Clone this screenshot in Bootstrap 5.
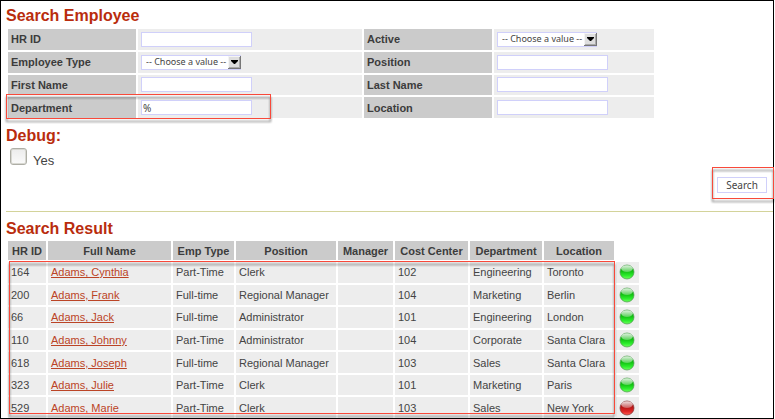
<!DOCTYPE html>
<html lang="en">
<head>
<meta charset="utf-8">
<meta name="viewport" content="width=device-width, initial-scale=1">
<title>Search Employee</title>
<link href="https://cdn.jsdelivr.net/npm/bootstrap@5.3.0/dist/css/bootstrap.min.css" rel="stylesheet">
<style>
body { font-family: "Liberation Sans", Arial, sans-serif; font-size: 11px; line-height: 18px; color: #444; background: #fff; }
.frame { min-height: 100vh; margin-right: 1px; padding: 5px 0 0 5px; border: 1px solid #000; }
.title { font-size: 16px; line-height: 20px; font-weight: 700; color: #b92c0d; margin: 0; }
.grid { border-collapse: separate; border-spacing: 2px; table-layout: fixed; line-height: 16px; }
.grid th { background: #cbcbcb; color: #3c3c3c; }
.grid td { background: #ededed; }
.grid th, .grid td { padding: 0 3px; vertical-align: middle; white-space: nowrap; }
.criteria { width: 650px; height: 93px; margin-top: 1px; }
.criteria label { display: block; }
.results { width: 635px; height: 181px; margin-bottom: -2px; }
.results thead tr { height: 19px; }
.results thead th { padding: 0; text-align: center; }
.results thead th.blank { background: none; }
.results a { color: #bb4426; }
.field, .pick select, .go { font-family: "Noto Sans", "Open Sans", sans-serif; color: #444; background: #fff; border: 1px solid #d0d0fa; border-radius: 0; }
.field { display: block; width: 111px; height: 15px; padding: 0 1px; font-size: 10px; line-height: 13px; }
.pick { display: block; width: 100px; height: 15px; }
.pick select { display: block; width: 100%; height: 100%; padding: 0 0 0 4px; appearance: none; font-size: 9px; line-height: 12px; }
.pick svg { position: absolute; right: 0; top: 1px; pointer-events: none; }
.outline { position: absolute; border: 1px solid #f8493a; filter: drop-shadow(0 3px 1px rgba(0,0,0,.55)); pointer-events: none; z-index: 2; }
.outline-row { left: -2px; top: -3px; width: 265px; height: 25px; }
.outline-go { inset: -10px -7px -6px -5px; }
.outline-list { left: 3px; top: 22px; width: 606px; height: 153px; }
.tick { appearance: none; width: 17px; height: 17px; border: 1px solid #aeaea6; border-radius: 3px; background: linear-gradient(#ececec, #fafafa); box-shadow: inset 0 0 0 1px #d8d8d2; margin: 0; }
.tick:checked { background: #666; }
.yes { font-size: 13px; padding-top: 4px; }
.criteria + .title { margin-top: 6px; }
.debug { padding-left: 4px; gap: 6px; margin-top: 2px; }
.actions { padding: 7px 6px 0 0; }
.go { width: 50px; height: 16px; padding: 0; font-size: 10px; line-height: 13px; display: block; }
.rule { border: 0; border-top: 1px solid #d3d39a; opacity: 1; margin: 18px 0 7px; }
.orb { display: block; }
</style>
</head>
<body>
<svg width="0" height="0" class="position-absolute" aria-hidden="true">
  <defs>
    <linearGradient id="gBody" x1="0" y1="0" x2="0" y2="1"><stop offset="0" stop-color="#1ca81c"/><stop offset=".45" stop-color="#12c012"/><stop offset=".75" stop-color="#2cec2c"/><stop offset="1" stop-color="#6cff5c"/></linearGradient>
    <linearGradient id="rBody" x1="0" y1="0" x2="0" y2="1"><stop offset="0" stop-color="#981818"/><stop offset=".45" stop-color="#b81616"/><stop offset=".75" stop-color="#e02828"/><stop offset="1" stop-color="#ff5a50"/></linearGradient>
    <linearGradient id="shine" x1="0" y1="0" x2="0" y2="1"><stop offset="0" stop-color="#fff" stop-opacity=".85"/><stop offset="1" stop-color="#fff" stop-opacity=".3"/></linearGradient>
    <symbol id="green" viewBox="0 0 16 16"><circle cx="8" cy="8" r="7" fill="url(#gBody)" stroke="#4c984c" stroke-width=".7"/><ellipse cx="8" cy="4.6" rx="5.8" ry="3.3" fill="url(#shine)"/></symbol>
    <symbol id="red" viewBox="0 0 16 16"><circle cx="8" cy="8" r="7" fill="url(#rBody)" stroke="#7c3434" stroke-width=".7"/><ellipse cx="8" cy="4.6" rx="5.8" ry="3.3" fill="url(#shine)"/></symbol>
    <symbol id="drop" viewBox="0 0 13 13"><path d="M0 0H13V13H0Z" fill="#777"/><path d="M0 0H12V12H0Z" fill="#f4f4f4"/><path d="M1 12H12V1H11V11H1Z" fill="#aaa"/><path d="M1 1H11V11H1Z" fill="#dedede"/><path d="M3 4H10V5L7 8H6L3 5Z" fill="#000"/></symbol>
  </defs>
</svg>
<main class="frame">
  <form>
    <h1 class="title">Search Employee</h1>
    <table class="grid criteria">
      <colgroup><col style="width:128px"><col style="width:224px"><col style="width:128px"><col style="width:160px"></colgroup>
      <tbody>
        <tr><th><label for="hrid">HR ID</label></th><td><input class="field" id="hrid" type="text"></td><th><label for="active">Active</label></th><td><span class="pick position-relative"><select id="active"><option>-- Choose a value --</option></select><svg width="13" height="13" aria-hidden="true"><use href="#drop"/></svg></span></td></tr>
        <tr><th><label for="etype">Employee Type</label></th><td><span class="pick position-relative"><select id="etype"><option>-- Choose a value --</option></select><svg width="13" height="13" aria-hidden="true"><use href="#drop"/></svg></span></td><th><label for="position">Position</label></th><td><input class="field" id="position" type="text"></td></tr>
        <tr><th><label for="first">First Name</label></th><td><input class="field" id="first" type="text"></td><th><label for="last">Last Name</label></th><td><input class="field" id="last" type="text"></td></tr>
        <tr><th class="position-relative"><label for="dept">Department</label><span class="outline outline-row"></span></th><td><input class="field" id="dept" type="text" value="%"></td><th><label for="location">Location</label></th><td><input class="field" id="location" type="text"></td></tr>
      </tbody>
    </table>
    <h2 class="title">Debug:</h2>
    <div class="debug d-flex"><input class="tick" type="checkbox" id="debug"><label class="yes" for="debug">Yes</label></div>
    <div class="actions d-flex justify-content-end"><div class="position-relative"><button class="go" type="submit">Search</button><span class="outline outline-go"></span></div></div>
  </form>
  <hr class="rule">
  <section>
    <h2 class="title">Search Result</h2>
    <div class="position-relative">
    <table class="grid results">
      <colgroup><col style="width:38px"><col style="width:123px"><col style="width:61px"><col style="width:100px"><col style="width:55px"><col style="width:73px"><col style="width:72px"><col style="width:70px"><col style="width:23px"></colgroup>
      <thead><tr><th>HR ID</th><th>Full Name</th><th>Emp Type</th><th>Position</th><th>Manager</th><th>Cost Center</th><th>Department</th><th>Location</th><th class="blank"></th></tr></thead>
      <tbody>
        <tr><td>164</td><td><a href="#">Adams, Cynthia</a></td><td>Part-Time</td><td>Clerk</td><td></td><td>102</td><td>Engineering</td><td>Toronto</td><td><svg class="orb" width="16" height="16"><use href="#green"/></svg></td></tr>
        <tr><td>200</td><td><a href="#">Adams, Frank</a></td><td>Full-time</td><td>Regional Manager</td><td></td><td>104</td><td>Marketing</td><td>Berlin</td><td><svg class="orb" width="16" height="16"><use href="#green"/></svg></td></tr>
        <tr><td>66</td><td><a href="#">Adams, Jack</a></td><td>Full-time</td><td>Administrator</td><td></td><td>101</td><td>Engineering</td><td>London</td><td><svg class="orb" width="16" height="16"><use href="#green"/></svg></td></tr>
        <tr><td>110</td><td><a href="#">Adams, Johnny</a></td><td>Part-Time</td><td>Administrator</td><td></td><td>104</td><td>Corporate</td><td>Santa Clara</td><td><svg class="orb" width="16" height="16"><use href="#green"/></svg></td></tr>
        <tr><td>618</td><td><a href="#">Adams, Joseph</a></td><td>Full-time</td><td>Regional Manager</td><td></td><td>103</td><td>Sales</td><td>Santa Clara</td><td><svg class="orb" width="16" height="16"><use href="#green"/></svg></td></tr>
        <tr><td>323</td><td><a href="#">Adams, Julie</a></td><td>Part-Time</td><td>Clerk</td><td></td><td>101</td><td>Marketing</td><td>Paris</td><td><svg class="orb" width="16" height="16"><use href="#green"/></svg></td></tr>
        <tr><td>529</td><td><a href="#">Adams, Marie</a></td><td>Part-Time</td><td>Clerk</td><td></td><td>103</td><td>Sales</td><td>New York</td><td><svg class="orb" width="16" height="16"><use href="#red"/></svg></td></tr>
      </tbody>
    </table>
    <span class="outline outline-list"></span>
    </div>
  </section>
</main>
<script src="https://cdn.jsdelivr.net/npm/bootstrap@5.3.0/dist/js/bootstrap.bundle.min.js"></script>
</body>
</html>
